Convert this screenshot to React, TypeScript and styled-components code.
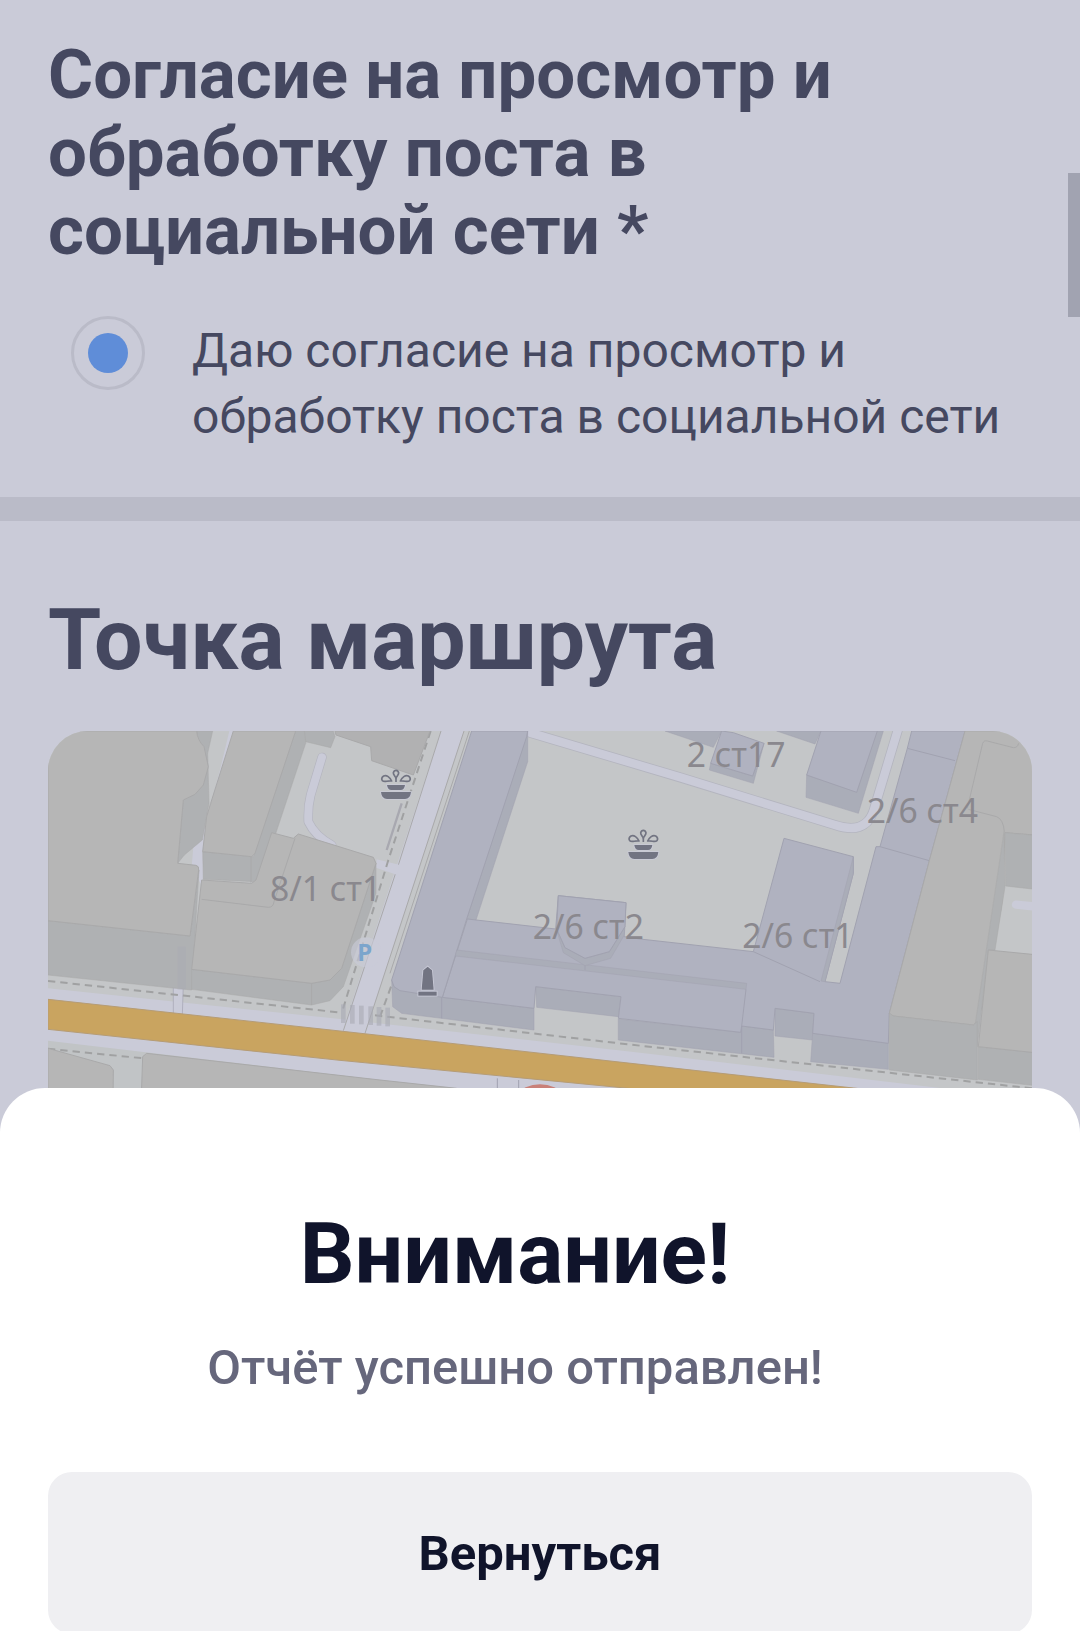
import React, { useState } from "react";
import styled, { createGlobalStyle } from "styled-components";

const color = {
  page: "#cacbd8",
  divider: "#babbc8",
  text: "#454860",
  thumb: "#a1a3b1",
  radio: "#5f8dd8",
  ink: "#10142b",
  muted: "#66677c",
  button: "#efeff2",
};

const map = {
  ground: "#c4c6c8",
  walk: "#c1c4c6",
  road: "#cacbd8",
  main: "#c9a460",
  gray: "#b6b6b6",
  graySide: "#afb1b3",
  blue: "#b0b2c0",
  blueSide: "#aaadb8",
  grayLine: "#a9a9aa",
  blueLine: "#a1a2b0",
  icon: "#727482",
  label: "#8a888e",
};

const GlobalStyle = createGlobalStyle`
  * { box-sizing: border-box; }
  body {
    margin: 0;
    background: ${color.page};
    font-family: Roboto, "Noto Sans", sans-serif;
  }
`;

const Screen = styled.div`
  position: relative;
  height: 100vh;
  overflow: hidden;
  background: ${color.page};
`;

const ScrollThumb = styled.div`
  position: absolute;
  top: 173px;
  right: 0;
  width: 12px;
  height: 144px;
  background: ${color.thumb};
`;

const Question = styled.section`
  padding: 36px 48px 47px;
  color: ${color.text};
`;

const QuestionTitle = styled.h2`
  margin: 0 0 46px;
  max-width: 900px;
  font-size: 69px;
  line-height: 78px;
  font-weight: 700;
`;

const Option = styled.label`
  display: flex;
  align-items: flex-start;
  gap: 47px;
  padding-left: 23px;
`;

const Radio = styled.input`
  appearance: none;
  flex: none;
  display: grid;
  place-items: center;
  width: 74px;
  height: 74px;
  margin: 0;
  border: 3px solid ${color.divider};
  border-radius: 50%;

  &:checked::before {
    content: "";
    width: 40px;
    height: 40px;
    border-radius: 50%;
    background: ${color.radio};
  }
`;

const OptionText = styled.span`
  padding-top: 2px;
  font-size: 48px;
  line-height: 66px;
`;

const Divider = styled.hr`
  height: 24px;
  margin: 0;
  border: 0;
  background: ${color.divider};
`;

const RouteSection = styled.section`
  padding: 69px 48px 0;
  color: ${color.text};
`;

const Title = styled.h1`
  margin: 0;
  font-size: 86px;
  line-height: 99px;
  font-weight: 700;
`;

const MapFrame = styled.div`
  height: 405px;
  margin-top: 42px;
  overflow: hidden;
  border-radius: 40px;
  background: ${map.ground};
`;

const MapDrawing = styled.svg`
  display: block;
  width: 100%;
  height: 100%;
`;

const MapLabel = styled.text`
  font-family: "Noto Sans", sans-serif;
  font-size: 101px;
  fill: ${map.label};
`;

const ParkingLabel = styled.text`
  font-family: "Noto Sans", sans-serif;
  font-size: 72px;
  font-weight: 700;
  fill: #7ba5cc;
`;

const Sheet = styled.div`
  position: relative;
  margin-top: -48px;
  padding: 116px 48px 48px;
  border-radius: 45px 45px 0 0;
  background: #fff;
  color: ${color.ink};
`;

const SheetHeader = styled.header`
  display: flex;
  flex-direction: column;
  gap: 32px;
  margin-bottom: 71px;
  padding-right: 50px;
  text-align: center;
`;

const Message = styled.p`
  margin: 0;
  font-size: 49px;
  line-height: 66px;
  font-weight: 500;
  color: ${color.muted};
`;

const Button = styled.button`
  width: 100%;
  height: 162px;
  padding: 2px 24px 0;
  border: 0;
  border-radius: 24px;
  background: ${color.button};
  color: ${color.ink};
  font: 700 49px/66px Roboto, "Noto Sans", sans-serif;
`;

type ShapeProps = { points: string; fill: string };

const Gray = ({ points, fill }: ShapeProps) => (
  <polygon
    points={points}
    fill={fill}
    stroke={map.grayLine}
    strokeOpacity={fill === map.graySide ? 0.5 : 1}
    strokeWidth={3}
    strokeLinejoin="round"
  />
);

const Blue = ({ points, fill }: ShapeProps) => (
  <polygon
    points={points}
    fill={fill}
    stroke={map.blueLine}
    strokeOpacity={fill === map.blueSide ? 0.5 : 1}
    strokeWidth={3}
    strokeLinejoin="round"
  />
);

const Fountain = ({ x, y }: { x: number; y: number }) => (
  <g transform={`translate(${x} ${y})`}>
    <g fill={map.icon} stroke={map.road} strokeWidth={5} paintOrder="stroke">
      <path d="M-27 47H27Q25 62 14 62H-14Q-25 62 -27 47Z" />
      <path d="M-45 68H45Q43 89 27 89H-27Q-43 89 -45 68Z" />
    </g>
    <g fill="none" stroke={map.icon} strokeWidth={5} strokeLinejoin="round">
      <path d="M0 26C-4 19 -9 15 -8 10Q-6 3 0 3Q6 3 8 10C9 15 4 19 0 26Z" />
      <path d="M-13 35C-18 24 -28 16 -37 20Q-46 26 -41 34C-34 40 -26 33 -13 35Z" />
      <path d="M13 35C18 24 28 16 37 20Q46 26 41 34C34 40 26 33 13 35Z" />
      <path d="M0 26V38" />
    </g>
  </g>
);

const CityMap = () => (
  <MapDrawing viewBox="24 33 2952 1215" preserveAspectRatio="xMidYMin slice" role="img" aria-label="Карта">
    <rect x="24" y="33" width="2952" height="1215" fill={map.ground} />

    {/* carriageways and lanes */}
    <polygon points="24,805 900,897 1800,998 2700,1104 2976,1136 2976,1248 24,1248" fill={map.road} />
    <polygon points="24,962 1020,1080 1340,1115 1340,1248 24,1248" fill={map.walk} />
    <polygon points="1203,33 1272,33 960,985 890,985" fill={map.road} />
    <path d="M1203 33L1075 435L910 932M1272 33L975 940M1288 33L1050 760" fill="none" stroke={map.grayLine} strokeWidth="3" />
    <polygon points="1010,418 1080,435 1070,464 1008,443" fill={map.road} />
    <polygon points="400,790 430,790 427,885 400,882" fill={map.road} stroke={map.blueLine} strokeWidth="2" />
    <polygon points="568,33 582,33 510,270 487,500 455,440 460,380 487,350 540,150" fill={map.road} />
    <g fill="none" strokeLinecap="round" strokeLinejoin="round">
      <path d="M846 112L812 225Q803 260 805 305Q825 348 875 375" stroke="#b4b5bf" strokeWidth="28" />
      <path d="M846 112L812 225Q803 260 805 305Q825 348 875 375" stroke={map.road} strokeWidth="24" />
      <path d="M1470 38L1920 172L2385 315Q2475 345 2500 275L2575 25" stroke="#b4b5bf" strokeWidth="30" />
      <path d="M1470 38L1920 172L2385 315Q2475 345 2500 275L2575 25" stroke={map.road} strokeWidth="25" />
    </g>

    {/* main avenue */}
    <path
      d="M24 838L900 933L1800 1033L2440 1104L3000 1166V1260L1920 1120L900 1021L24 928Z"
      fill={map.main}
      stroke="#b59c76"
      strokeWidth="3"
    />
    <path d="M1372 1075V1130M1436 1080V1130" stroke={map.blueLine} strokeWidth="3" />
    <circle cx="1500" cy="1205" r="112" fill="#c98078" />

    {/* footpaths */}
    <g fill="none" stroke="#a0a1a2" strokeWidth="6" strokeDasharray="22 15">
      <path d="M24 783L905 878" />
      <path d="M1005 886L1800 977L2976 1105" />
      <path d="M24 986L310 1015" />
      <path d="M1172 33L1045 420L905 880" />
      <path d="M1053 800L1020 890" />
    </g>
    <g fill="#a9abb5" opacity="0.6">
      {[903, 930, 957, 985, 1010, 1036].map((x, i) => (
        <rect key={x} x={x} y={853 + i * 2} width="14" height="56" />
      ))}
    </g>

    {/* west blocks */}
    <Gray fill={map.graySide} points="470,33 518,33 503,100 507,250 487,360 433,405 413,430 430,240 490,190" />
    <Gray fill={map.graySide} points="24,602 450,648 477,450 455,810 24,765" />
    <path
      d="M24 33H470Q472 60 492 80L505 140L490 195L465 223L430 240L413 430L468 436Q478 438 476 450L450 648L24 602Z"
      fill={map.gray}
      stroke={map.grayLine}
      strokeWidth="3"
    />
    <path d="M425 680V808" stroke="#a9aab4" strokeWidth="24" opacity="0.4" />
    <Gray fill={map.graySide} points="767,33 800,33 797,70 708,338 645,485 490,478 488,395 640,410" />
    <Gray fill={map.gray} points="580,33 767,33 645,400 635,410 488,395 500,290 512,250" />
    <path d="M633 410V488" stroke={map.grayLine} strokeWidth="3" />
    <Gray fill={map.graySide} points="455,748 815,790 870,780 905,745 1008,430 1008,520 910,800 870,842 815,855 455,808" />
    <Gray
      fill={map.gray}
      points="695,338 760,355 775,342 1000,412 1008,430 905,745 870,780 815,790 455,748 485,480 635,490 648,480"
    />
    <path d="M485 538L685 562Q700 562 702 545L765 355M815 790V855" fill="none" stroke={map.grayLine} strokeWidth="3" />
    <Gray fill={map.graySide} points="793,33 880,33 885,50 872,83 797,65" />
    <Gray fill="#b1b1b2" points="885,33 1170,33 1120,165 995,122 992,80 888,45" />
    <path d="M1085 250L1040 390" stroke="#a8a8b0" strokeWidth="7" />
    <Gray fill={map.gray} points="24,985 210,1037 220,1050 218,1248 24,1248" />
    <Gray fill={map.gray} points="300,1248 308,1010 320,1000 1020,1080 1250,1105 1260,1248" />

    {/* courtyard blocks */}
    <Blue fill={map.blueSide} points="1875,33 2045,33 2020,82" />
    <Blue fill={map.blueSide} points="2012,130 2138,168 2172,70 2140,190 2008,150" />
    <Blue fill={map.blue} points="2045,33 2080,38 2172,70 2138,168 2012,130" />
    <Blue fill={map.blueSide} points="2210,33 2343,33 2325,72" />
    <Blue fill={map.blueSide} points="2300,165 2450,215 2510,33 2530,33 2455,280 2298,232" />
    <Blue fill={map.blue} points="2343,33 2512,33 2450,217 2300,165" />
    <Blue fill={map.blueSide} points="1463,33 1463,125 1308,600 1280,597" />
    <Blue fill={map.blueSide} points="1055,780 1068,800 1208,832 1482,865 1482,930 1205,895 1085,880 1058,860" />
    <Blue fill={map.blueSide} points="1487,800 1743,830 1735,890 1490,862" />
    <Blue fill={map.blueSide} points="1735,897 2102,937 2105,918 2200,930 2202,1012 1735,960" />
    <Blue fill={map.blueSide} points="2205,865 2322,880 2318,960 2205,948" />
    <Blue fill={map.blueSide} points="2318,940 2545,970 2545,1048 2312,1025" />
    <Blue
      fill={map.blue}
      points="1282,597 1547,627 1555,527 1758,548 1752,650 1800,657 2140,695 2232,355 2440,410 2440,460 2355,785 2400,790 2508,380 2520,380 2602,85 2615,33 2775,33 2668,422 2548,880 2545,970 2318,940 2322,880 2205,865 2200,930 2105,918 2102,937 1735,895 1743,830 1487,800 1482,865 1207,832"
    />
    <Blue fill={map.blue} points="1295,33 1463,33 1460,50 1280,597 1207,832 1080,812 1062,800 1055,780" />
    <Blue fill={map.blueSide} points="1250,690 2120,790 2118,808 1246,708" />
    <Blue fill={map.blueSide} points="1550,630 1575,683 1635,715 1708,695 1755,620 1753,645 1712,715 1635,737 1570,698" />
    <Blue fill={map.blue} points="1555,527 1758,548 1755,620 1708,695 1635,715 1575,683 1550,627" />
    <Blue fill={map.blueSide} points="2440,410 2440,460 2355,785 2343,783" />
    <path
      d="M2140 695L2340 785M2118 808L2105 918M2105 918V1000M2602 85L2745 122M2520 380L2668 422M1205 832V895M1635 737V750"
      fill="none"
      stroke={map.blueLine}
      strokeWidth="3"
    />

    {/* east blocks */}
    <Gray fill={map.gray} points="2775,33 2985,33 2985,345 2895,338 2880,690 2812,905 2800,915 2560,888 2548,880 2668,422" />
    <polygon points="2897,498 2985,508 2985,705 2862,692" fill={map.ground} />
    <Gray fill={map.graySide} points="2892,335 2895,500 2865,690 2845,690 2812,980 2806,910" />
    <Gray fill={map.graySide} points="2895,338 2985,346 2985,508 2897,498" />
    <Gray fill={map.graySide} points="2548,880 2560,888 2800,915 2812,905 2812,1080 2548,1050" />
    <Gray fill={map.graySide} points="2815,980 2985,998 2985,1097 2815,1078" />
    <Gray fill={map.gray} points="2845,690 2985,704 2985,998 2815,980" />
    <path d="M2928 554L2990 560" stroke={map.road} strokeWidth="25" strokeLinecap="round" />
    <path
      d="M2782 265L2828 70Q2832 60 2842 63L2920 83Q2932 84 2936 70M2785 268L2870 290Q2890 298 2893 335"
      fill="none"
      stroke={map.grayLine}
      strokeWidth="3"
    />

    {/* points of interest */}
    <Fountain x={1068} y={148} />
    <Fountain x={1810} y={328} />
    <g fill={map.icon} stroke={map.road} strokeWidth="5" paintOrder="stroke">
      <path d="M1150 751L1163 740L1176 751L1181 809H1145Z" />
      <path d="M1135 815H1190V827H1135Z" />
    </g>
    <circle cx="978" cy="697" r="45" fill={map.road} opacity="0.6" />
    <ParkingLabel x="952" y="723">P</ParkingLabel>
    <MapLabel x="690" y="544">8/1 ст1</MapLabel>
    <MapLabel x="1478" y="657">2/6 ст2</MapLabel>
    <MapLabel x="1940" y="141">2 ст17</MapLabel>
    <MapLabel x="2480" y="310">2/6 ст4</MapLabel>
    <MapLabel x="2107" y="685">2/6 ст1</MapLabel>
  </MapDrawing>
);

export default function App() {
  const [agreed, setAgreed] = useState(true);

  return (
    <>
      <GlobalStyle />
      <Screen>
        <Question>
          <QuestionTitle>Согласие на просмотр и обработку поста в социальной сети *</QuestionTitle>
          <Option>
            <Radio type="radio" name="consent" checked={agreed} onChange={() => setAgreed(true)} />
            <OptionText>Даю согласие на просмотр и обработку поста в социальной сети</OptionText>
          </Option>
        </Question>
        <Divider />
        <RouteSection>
          <Title as="h2">Точка маршрута</Title>
          <MapFrame>
            <CityMap />
          </MapFrame>
        </RouteSection>
        <Sheet role="dialog" aria-labelledby="sheet-title">
          <SheetHeader>
            <Title id="sheet-title">Внимание!</Title>
            <Message>Отчёт успешно отправлен!</Message>
          </SheetHeader>
          <Button type="button">Вернуться</Button>
        </Sheet>
        <ScrollThumb />
      </Screen>
    </>
  );
}
